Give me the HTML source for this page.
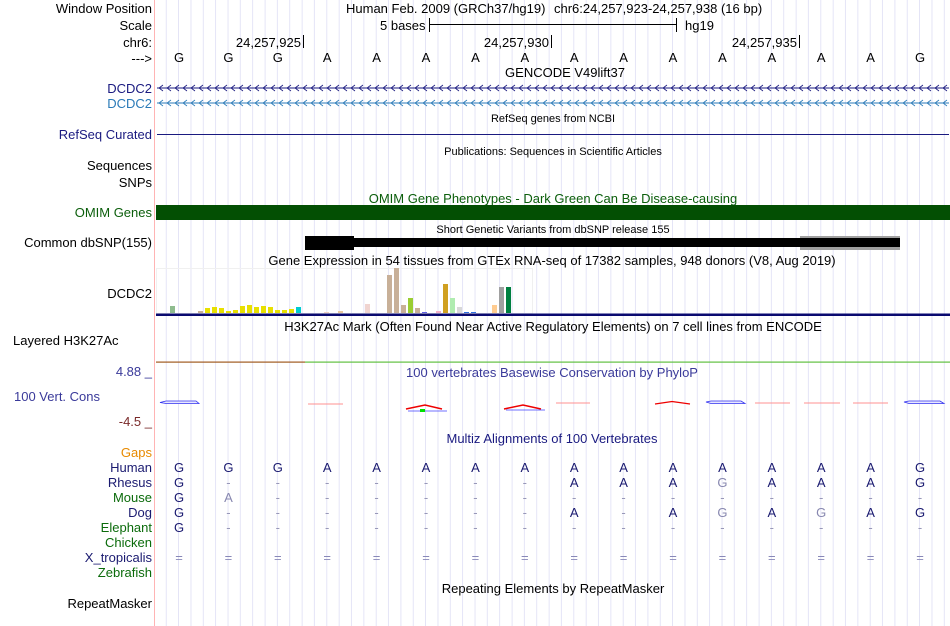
<!DOCTYPE html>
<html><head><meta charset="utf-8"><style>
html,body{margin:0;padding:0;background:#fff;}
svg{display:block;font-family:"Liberation Sans",Arial,sans-serif;}
</style></head><body>
<svg width="950" height="626" viewBox="0 0 950 626" xmlns="http://www.w3.org/2000/svg">
<defs>
<pattern id="grid" x="154.3" y="0" width="12.35" height="626" patternUnits="userSpaceOnUse">
<rect x="11.6" y="0" width="1" height="626" fill="#dcdcf4"/>
</pattern>
<pattern id="chev1" x="157" y="80" width="8" height="16" patternUnits="userSpaceOnUse">
<path d="M6,5 L2,8 L6,11" fill="none" stroke="#1a1a80" stroke-width="0.8"/>
</pattern>
<pattern id="chev2" x="157" y="95" width="8" height="16" patternUnits="userSpaceOnUse">
<path d="M6,5 L2,8 L6,11" fill="none" stroke="#2a7ab8" stroke-width="0.8"/>
</pattern>
</defs>
<rect x="155" y="0" width="795" height="626" fill="url(#grid)"/>
<rect x="154" y="0" width="1" height="626" fill="#ffb4b4"/>

<g font-size="13" text-anchor="end" fill="#000">
<text x="152" y="13">Window Position</text>
<text x="152" y="30">Scale</text>
<text x="152" y="47">chr6:</text>
<text x="152" y="63">---&gt;</text>
<text x="152" y="93" fill="#1a1a80">DCDC2</text>
<text x="152" y="108" fill="#2a7ab8">DCDC2</text>
<text x="152" y="139" fill="#1a1a80">RefSeq Curated</text>
<text x="152" y="170">Sequences</text>
<text x="152" y="187">SNPs</text>
<text x="152" y="217" fill="#0b5e0b">OMIM Genes</text>
<text x="152" y="247">Common dbSNP(155)</text>
<text x="152" y="298">DCDC2</text>
<text x="152" y="376" fill="#3a3a9a">4.88 _</text>
<text x="100" y="401" fill="#3a3a9a">100 Vert. Cons</text>
<text x="152" y="426" fill="#7a2a2a">-4.5 _</text>
<text x="152" y="457" fill="#e88a00">Gaps</text>
<text x="152" y="472" fill="#1a1a70">Human</text>
<text x="152" y="487" fill="#1a1a70">Rhesus</text>
<text x="152" y="502" fill="#0b6b0b">Mouse</text>
<text x="152" y="517" fill="#1a1a70">Dog</text>
<text x="152" y="532" fill="#0b6b0b">Elephant</text>
<text x="152" y="547" fill="#0b6b0b">Chicken</text>
<text x="152" y="562" fill="#1a1a70">X_tropicalis</text>
<text x="152" y="577" fill="#0b6b0b">Zebrafish</text>
<text x="152" y="608">RepeatMasker</text>
</g>
<text x="13" y="345" font-size="13">Layered H3K27Ac</text>

<g font-size="13" fill="#000">
<text x="346" y="13">Human Feb. 2009 (GRCh37/hg19)</text>
<text x="554" y="13">chr6:24,257,923-24,257,938 (16 bp)</text>
<text x="380" y="30">5 bases</text>
<text x="685" y="30">hg19</text>
<text x="301" y="47" text-anchor="end">24,257,925</text>
<text x="549" y="47" text-anchor="end">24,257,930</text>
<text x="797" y="47" text-anchor="end">24,257,935</text>
</g>
<g fill="#000">
<rect x="429" y="18" width="1" height="14"/><rect x="676" y="18" width="1" height="14"/><rect x="430" y="24" width="246" height="1"/>
<rect x="303" y="35" width="1" height="13"/><rect x="551" y="35" width="1" height="13"/><rect x="799" y="35" width="1" height="13"/>
</g>
<text font-size="13" text-anchor="middle" y="62" x="179 228.4 277.8 327.2 376.6 426 475.4 524.8 574.2 623.6 673 722.4 771.8 821.2 870.6 920">GGGAAAAAAAAAAAAG</text>

<text x="565" y="77" font-size="13" text-anchor="middle">GENCODE V49lift37</text>
<rect x="157" y="87.5" width="792" height="1" fill="#1a1a80"/>
<rect x="157" y="80" width="792" height="16" fill="url(#chev1)"/>
<rect x="157" y="102.5" width="792" height="1" fill="#2a7ab8"/>
<rect x="157" y="95" width="792" height="16" fill="url(#chev2)"/>

<text x="553" y="122" font-size="11" text-anchor="middle">RefSeq genes from NCBI</text>
<rect x="157" y="134" width="792" height="1" fill="#1a1a80"/>
<text x="553" y="155" font-size="11" text-anchor="middle">Publications: Sequences in Scientific Articles</text>

<text x="553" y="203" font-size="13" text-anchor="middle" fill="#0b5e0b">OMIM Gene Phenotypes - Dark Green Can Be Disease-causing</text>
<rect x="156" y="205" width="794" height="15" fill="#034f03"/>

<text x="553" y="233" font-size="11" text-anchor="middle">Short Genetic Variants from dbSNP release 155</text>
<rect x="305" y="236" width="49" height="14" fill="#000"/>
<rect x="354" y="238" width="546" height="9" fill="#000"/>
<rect x="800" y="236" width="100" height="14" fill="#a0a0a0"/>
<rect x="800" y="238" width="100" height="9" fill="#000"/>

<text x="552" y="265" font-size="13" text-anchor="middle">Gene Expression in 54 tissues from GTEx RNA-seq of 17382 samples, 948 donors (V8, Aug 2019)</text>
<rect x="156.5" y="268.5" width="376" height="45" fill="none" stroke="#f0f0f0"/>
<g>
<rect x="170" y="306" width="5" height="7" fill="#8fbc8f"/>
<rect x="198" y="311" width="5" height="2" fill="#c8b098"/>
<rect x="205" y="308" width="5" height="5" fill="#e8e000"/>
<rect x="212" y="307" width="5" height="6" fill="#e8e000"/>
<rect x="219" y="308" width="5" height="5" fill="#e8e000"/>
<rect x="226" y="311" width="5" height="2" fill="#e8e000"/>
<rect x="233" y="310" width="5" height="3" fill="#e8e000"/>
<rect x="240" y="306" width="5" height="7" fill="#e8e000"/>
<rect x="247" y="305" width="5" height="8" fill="#e8e000"/>
<rect x="254" y="307" width="5" height="6" fill="#e8e000"/>
<rect x="261" y="306" width="5" height="7" fill="#e8e000"/>
<rect x="268" y="307" width="5" height="6" fill="#e8e000"/>
<rect x="275" y="310" width="5" height="3" fill="#e8e000"/>
<rect x="282" y="310" width="5" height="3" fill="#e8e000"/>
<rect x="289" y="309" width="5" height="4" fill="#e8e000"/>
<rect x="296" y="307" width="5" height="6" fill="#00ccd0"/>
<rect x="324" y="312" width="5" height="1" fill="#f0d0c0"/>
<rect x="338" y="311" width="5" height="2" fill="#e8c8a0"/>
<rect x="365" y="304" width="5" height="9" fill="#f0d4d0"/>
<rect x="387" y="275" width="5" height="38" fill="#c8b098"/>
<rect x="394" y="268" width="5" height="45" fill="#c8b098"/>
<rect x="401" y="305" width="5" height="8" fill="#c8b098"/>
<rect x="408" y="298" width="5" height="15" fill="#9acd32"/>
<rect x="415" y="308" width="5" height="5" fill="#c8b098"/>
<rect x="422" y="312" width="5" height="1" fill="#6060e0"/>
<rect x="436" y="311" width="5" height="2" fill="#f4b0c8"/>
<rect x="443" y="284" width="5" height="29" fill="#d0a020"/>
<rect x="450" y="298" width="5" height="15" fill="#b0ecb0"/>
<rect x="457" y="307" width="5" height="6" fill="#d8d8d8"/>
<rect x="464" y="312" width="5" height="1" fill="#3070e0"/>
<rect x="471" y="312" width="5" height="1" fill="#3070e0"/>
<rect x="492" y="305" width="5" height="8" fill="#ffcc90"/>
<rect x="499" y="287" width="5" height="26" fill="#a0a0a0"/>
<rect x="506" y="287" width="5" height="26" fill="#008040"/>
</g>
<rect x="156" y="313.5" width="794" height="2.5" fill="#0a0a70"/>

<text x="553" y="331" font-size="13" text-anchor="middle">H3K27Ac Mark (Often Found Near Active Regulatory Elements) on 7 cell lines from ENCODE</text>
<rect x="156" y="361.5" width="149" height="1.2" fill="#a05a20"/>
<rect x="305" y="361.5" width="645" height="1.2" fill="#60c040"/>

<text x="552" y="377" font-size="13" text-anchor="middle" fill="#3a3a9a">100 vertebrates Basewise Conservation by PhyloP</text>
<g fill="none">
<path d="M160,402.5 L166,401 L196,401 L199,403.5 L166,403.5 Z" stroke="#3030f0" stroke-width="0.8" fill="#e8e8ff"/>
<path d="M308,404 L343,404" stroke="#ff9090"/>
<path d="M406,409 L425,405 L442,409" stroke="#ee0000" stroke-width="1.5"/>
<path d="M408,411 L447,411" stroke="#4040ff" stroke-width="0.8"/>
<rect x="420" y="409" width="5" height="3" fill="#00e000"/>
<path d="M504,409 L523,405 L541,409" stroke="#ee0000" stroke-width="1.5"/>
<path d="M506,410 L545,410" stroke="#4040ff" stroke-width="0.8"/>
<path d="M556,403 L590,403" stroke="#ff9090"/>
<path d="M655,404 L672,401.5 L690,404" stroke="#ee0000" stroke-width="1.2"/>
<path d="M706,402 L711,401 L741,401 L745,403.5 L711,403.5 Z" stroke="#3030f0" stroke-width="0.8" fill="#e8e8ff"/>
<path d="M755,403 L790,403" stroke="#ff9090"/>
<path d="M804,403 L840,403" stroke="#ff9090"/>
<path d="M853,403 L888,403" stroke="#ff9090"/>
<path d="M904,402 L909,401 L940,401 L944,403.5 L909,403.5 Z" stroke="#3030f0" stroke-width="0.8" fill="#e8e8ff"/>
</g>

<text x="552" y="443" font-size="13" text-anchor="middle" fill="#1a1a80">Multiz Alignments of 100 Vertebrates</text>
<g font-size="13" text-anchor="middle" fill="#1a1a70">
<text y="472" x="179 228.4 277.8 327.2 376.6 426 475.4 524.8 574.2 623.6 673 722.4 771.8 821.2 870.6 920">GGGAAAAAAAAAAAAG</text>
<text y="487" x="179 228.4 277.8 327.2 376.6 426 475.4 524.8 574.2 623.6 673 722.4 771.8 821.2 870.6 920">G<tspan fill="#9898b8">-------</tspan>AAA<tspan fill="#8888b0">G</tspan>AAAG</text>
<text y="502" x="179 228.4 277.8 327.2 376.6 426 475.4 524.8 574.2 623.6 673 722.4 771.8 821.2 870.6 920">G<tspan fill="#8888b0">A</tspan><tspan fill="#9898b8">--------------</tspan></text>
<text y="517" x="179 228.4 277.8 327.2 376.6 426 475.4 524.8 574.2 623.6 673 722.4 771.8 821.2 870.6 920">G<tspan fill="#9898b8">-------</tspan>A<tspan fill="#9898b8">-</tspan>A<tspan fill="#8888b0">G</tspan>A<tspan fill="#8888b0">G</tspan>AG</text>
<text y="532" x="179 228.4 277.8 327.2 376.6 426 475.4 524.8 574.2 623.6 673 722.4 771.8 821.2 870.6 920">G<tspan fill="#9898b8">---------------</tspan></text>
<text y="562" fill="#8888b8" x="179 228.4 277.8 327.2 376.6 426 475.4 524.8 574.2 623.6 673 722.4 771.8 821.2 870.6 920">================</text>
</g>
<text x="553" y="593" font-size="13" text-anchor="middle">Repeating Elements by RepeatMasker</text>
</svg>
</body></html>
